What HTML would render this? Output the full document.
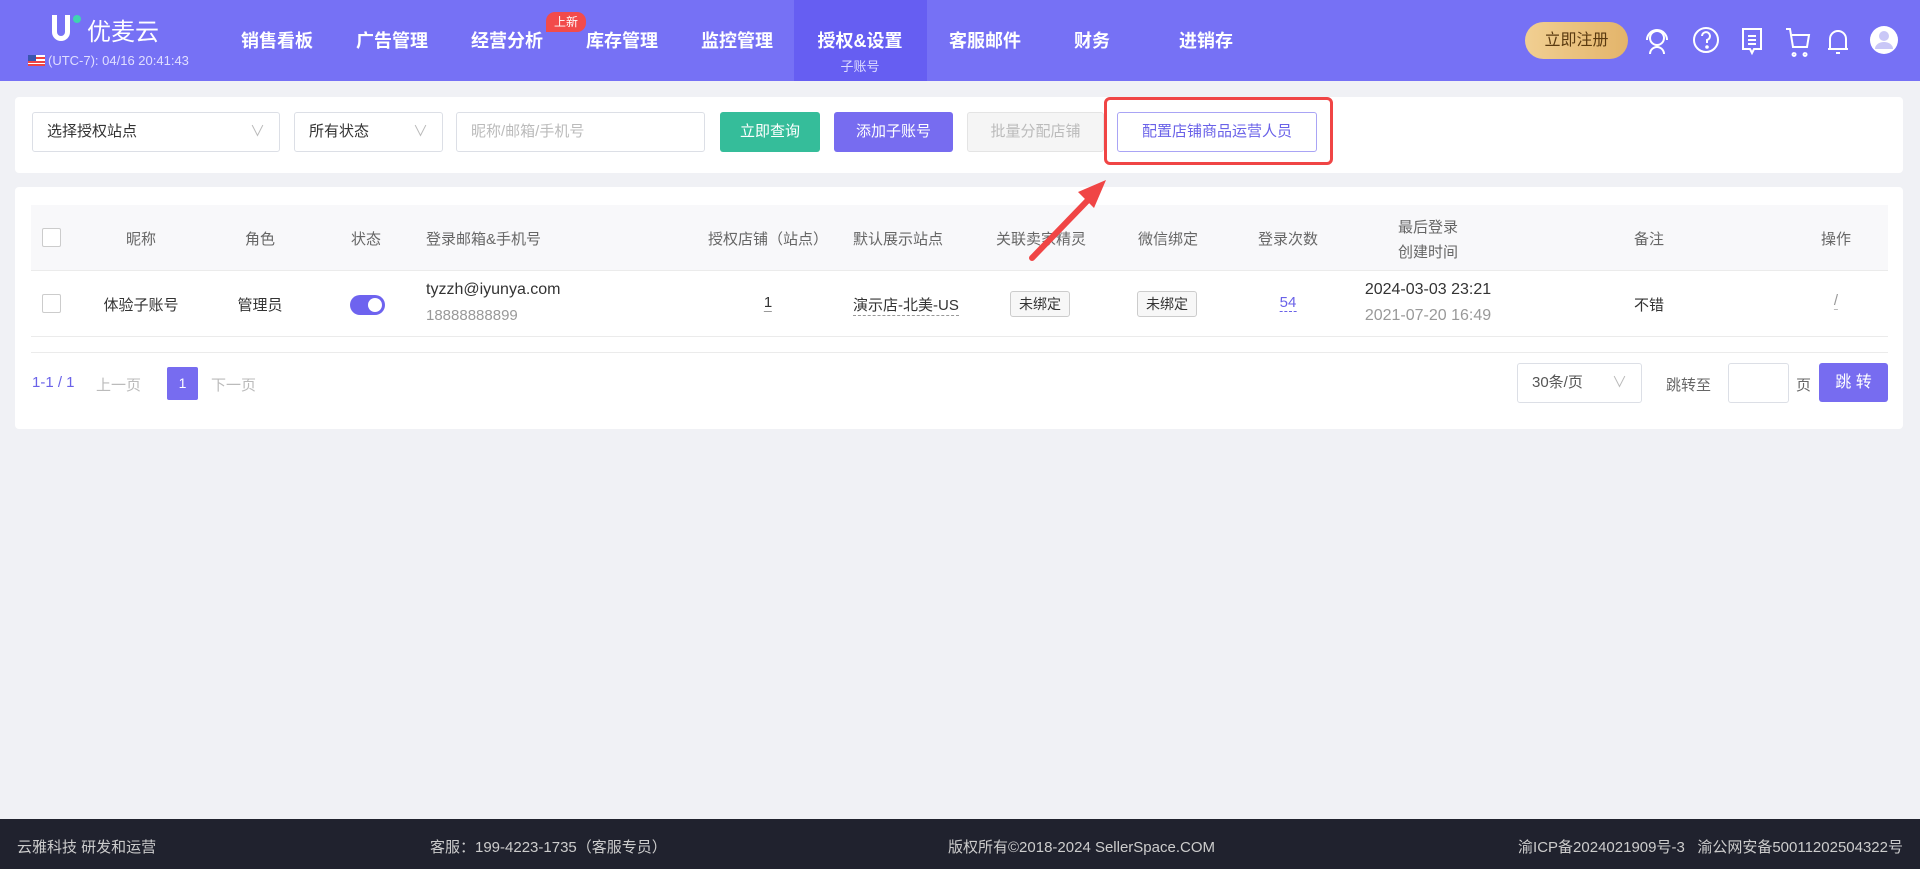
<!DOCTYPE html>
<html><head><meta charset="utf-8"><style>
*{box-sizing:border-box;margin:0;padding:0}
body{width:1920px;height:869px;background:#f0f1f5;font-family:"Liberation Sans","Noto Sans CJK SC",sans-serif;position:relative;overflow:hidden;color:#333}
.abs{position:absolute}
.hdr{left:0;top:0;width:1920px;height:81px;background:#7671f5}
.nav{top:27px;font-size:18px;font-weight:bold;color:#fff;transform:translateX(-50%);white-space:nowrap}
.card{background:#fff;border-radius:4px}
.inp{border:1px solid #dcdfe6;border-radius:3px;height:40px;font-size:15px;line-height:38px;padding-left:14px;background:#fff}
.btn{height:40px;border-radius:3px;font-size:15px;line-height:40px;text-align:center;color:#fff}
.th{font-size:15px;color:#666;transform:translateX(-50%);white-space:nowrap}
.td{font-size:15px;color:#333;transform:translateX(-50%);white-space:nowrap}
.tag{border:1px solid #ccc;border-radius:3px;background:#f7f7f7;font-size:14px;padding:2px 8px}
.chk{width:19px;height:19px;border:1px solid #ccc;border-radius:2px;background:#fff}
.ft{font-size:15px;color:#ccc;top:836px}
.ico{top:26px;width:28px;height:28px}
</style></head><body>
<div class="abs hdr"></div>
<div class="abs" style="left:52px;top:15px;width:18px;height:26px;border:5px solid #fff;border-top:none;border-radius:0 0 9px 9px"></div>
<div class="abs" style="left:73px;top:15px;width:8px;height:8px;border-radius:50%;background:#3ed3b0"></div>
<div class="abs" style="left:87px;top:12px;font-size:24px;color:#fff">优麦云</div>
<div class="abs" style="left:28px;top:55px;width:17px;height:11px;background:linear-gradient(#fff 0 2px,#e44 2px 4px,#fff 4px 6px,#e44 6px 8px,#fff 8px 9px,#e44 9px);"><div style="width:8px;height:6px;background:#3a55b0"></div></div>
<div class="abs" style="left:48px;top:53px;font-size:13px;color:#e0deff">(UTC-7): 04/16 20:41:43</div>
<div class="abs" style="left:794px;top:0;width:133px;height:81px;background:#665ef2"></div>
<div class="abs nav" style="left:277px">销售看板</div>
<div class="abs nav" style="left:392px">广告管理</div>
<div class="abs nav" style="left:507px">经营分析</div>
<div class="abs" style="left:546px;top:12px;width:40px;height:20px;border-radius:9px 9px 9px 0;background:#f24b4b;color:#fff;font-size:12px;text-align:center;line-height:20px">上新</div>
<div class="abs nav" style="left:622px">库存管理</div>
<div class="abs nav" style="left:737px">监控管理</div>
<div class="abs nav" style="left:860px">授权&amp;设置</div>
<div class="abs" style="left:860px;top:56px;transform:translateX(-50%);font-size:13px;color:#dcdaff">子账号</div>
<div class="abs nav" style="left:985px">客服邮件</div>
<div class="abs nav" style="left:1092px">财务</div>
<div class="abs nav" style="left:1206px">进销存</div>
<div class="abs" style="left:1525px;top:22px;width:103px;height:37px;border-radius:19px;background:linear-gradient(90deg,#f1cf92,#e3b46a);color:#5a3a10;font-size:16px;text-align:center;line-height:37px">立即注册</div>
<svg class="abs" style="left:1640px;top:24px" width="270" height="34" viewBox="0 0 270 34" fill="none" stroke="#fff" stroke-width="2">
<circle cx="17" cy="14" r="7"/><path d="M7 16a10 10 0 0 1 20 0M10 30a7 7 0 0 1 14 0"/>
<circle cx="66" cy="16" r="12"/><path d="M62 12a4 4 0 1 1 5 4v3"/><circle cx="67" cy="23" r="0.8" fill="#fff"/>
<path d="M103 5h18v20h-7l-2 4-2-4h-7z"/><path d="M108 12h8M108 16h8M108 20h8"/>
<path d="M146 5h4l3 18h14l2-12h-17M154 29a1.5 1.5 0 1 0 .1 0M165 29a1.5 1.5 0 1 0 .1 0"/>
<path d="M190 25V15a8 8 0 0 1 16 0v10h2H188M196 29h4"/>
<circle cx="244" cy="16" r="14" fill="#fff" stroke="none"/><circle cx="244" cy="12" r="5" fill="#c9c7f7" stroke="none"/><path d="M235 25a9 7 0 0 1 18 0" fill="#c9c7f7" stroke="none"/>
</svg>

<div class="abs card" style="left:15px;top:97px;width:1888px;height:76px"></div>
<div class="abs inp" style="left:32px;top:112px;width:248px;color:#333">选择授权站点<span style="position:absolute;right:14px;color:#bbb">∨</span></div>
<div class="abs inp" style="left:294px;top:112px;width:149px;color:#333">所有状态<span style="position:absolute;right:14px;color:#bbb">∨</span></div>
<div class="abs inp" style="left:456px;top:112px;width:249px;color:#bbb">昵称/邮箱/手机号</div>
<div class="abs btn" style="left:720px;top:112px;width:100px;background:#35bd9a">立即查询</div>
<div class="abs btn" style="left:834px;top:112px;width:119px;background:#776cf0">添加子账号</div>
<div class="abs btn" style="left:967px;top:112px;width:137px;background:#f5f5f5;border:1px solid #e4e4e4;color:#bbb;line-height:38px">批量分配店铺</div>
<div class="abs btn" style="left:1117px;top:112px;width:200px;background:#fff;border:1px solid #a9a4f5;color:#6a62e8;line-height:38px">配置店铺商品运营人员</div>
<div class="abs" style="left:1104px;top:97px;width:229px;height:68px;border:3px solid #f04545;border-radius:6px"></div>

<div class="abs card" style="left:15px;top:187px;width:1888px;height:242px"></div>
<div class="abs" style="left:31px;top:205px;width:1857px;height:66px;background:#f8f8fa;border-bottom:1px solid #ebebeb"></div>
<div class="abs" style="left:31px;top:336px;width:1857px;height:1px;background:#ebebeb"></div>
<div class="abs" style="left:31px;top:352px;width:1857px;height:1px;background:#ebebeb"></div>
<div class="abs chk" style="left:42px;top:228px"></div>
<div class="abs th" style="left:141px;top:228px">昵称</div>
<div class="abs th" style="left:260px;top:228px">角色</div>
<div class="abs th" style="left:366px;top:228px">状态</div>
<div class="abs th" style="left:426px;top:228px;transform:none">登录邮箱&amp;手机号</div>
<div class="abs th" style="left:768px;top:228px">授权店铺（站点）</div>
<div class="abs th" style="left:853px;top:228px;transform:none">默认展示站点</div>
<div class="abs th" style="left:1041px;top:228px">关联卖家精灵</div>
<div class="abs th" style="left:1168px;top:228px">微信绑定</div>
<div class="abs th" style="left:1288px;top:228px">登录次数</div>
<div class="abs th" style="left:1428px;top:216px">最后登录</div>
<div class="abs th" style="left:1428px;top:241px">创建时间</div>
<div class="abs th" style="left:1649px;top:228px">备注</div>
<div class="abs th" style="left:1836px;top:228px">操作</div>

<div class="abs chk" style="left:42px;top:294px"></div>
<div class="abs td" style="left:141px;top:294px">体验子账号</div>
<div class="abs td" style="left:260px;top:294px">管理员</div>
<div class="abs" style="left:350px;top:295px;width:35px;height:20px;border-radius:10px;background:#6e63ef"><div style="position:absolute;right:3px;top:3px;width:14px;height:14px;border-radius:50%;background:#fff"></div></div>
<div class="abs" style="left:426px;top:281px;font-size:16px">tyzzh@iyunya.com</div>
<div class="abs" style="left:426px;top:307px;font-size:15px;color:#999">18888888899</div>
<div class="abs td" style="left:768px;top:294px;border-bottom:1px solid #999">1</div>
<div class="abs" style="left:853px;top:294px;font-size:15px;border-bottom:1px dashed #999">演示店-北美-US</div>
<div class="abs tag" style="left:1010px;top:291px">未绑定</div>
<div class="abs tag" style="left:1137px;top:291px">未绑定</div>
<div class="abs td" style="left:1288px;top:294px;color:#6a62e8;border-bottom:1px dashed #6a62e8">54</div>
<div class="abs td" style="left:1428px;top:281px;font-size:16px">2024-03-03 23:21</div>
<div class="abs td" style="left:1428px;top:307px;color:#999;font-size:16px">2021-07-20 16:49</div>
<div class="abs td" style="left:1649px;top:294px">不错</div>
<div class="abs td" style="left:1836px;top:292px;color:#999;border-bottom:1px dashed #bbb">/</div>

<div class="abs" style="left:32px;top:374px;font-size:15px;color:#6a62e8">1-1 / 1</div>
<div class="abs" style="left:96px;top:374px;font-size:15px;color:#bbb">上一页</div>
<div class="abs" style="left:167px;top:367px;width:31px;height:33px;background:#776cf0;color:#fff;font-size:14px;text-align:center;line-height:33px;border-radius:2px">1</div>
<div class="abs" style="left:211px;top:374px;font-size:15px;color:#bbb">下一页</div>
<div class="abs inp" style="left:1517px;top:363px;width:125px;color:#555">30条/页<span style="position:absolute;right:14px;color:#bbb">∨</span></div>
<div class="abs" style="left:1666px;top:374px;font-size:15px;color:#666">跳转至</div>
<div class="abs inp" style="left:1728px;top:363px;width:61px"></div>
<div class="abs" style="left:1796px;top:374px;font-size:15px;color:#666">页</div>
<div class="abs btn" style="left:1819px;top:363px;width:69px;background:#776cf0;font-size:16px;height:39px;line-height:39px">跳 转</div>

<div class="abs" style="left:0;top:819px;width:1920px;height:50px;background:#20222e"></div>
<div class="abs ft" style="left:17px">云雅科技 研发和运营</div>
<div class="abs ft" style="left:430px">客服：199-4223-1735（客服专员）</div>
<div class="abs ft" style="left:948px">版权所有©2018-2024 SellerSpace.COM</div>
<div class="abs ft" style="right:17px">渝ICP备2024021909号-3&nbsp;&nbsp;&nbsp;渝公网安备50011202504322号</div>

<svg class="abs" style="left:1020px;top:170px" width="100" height="100"><path d="M12 88L70 28" stroke="#f04545" stroke-width="6" stroke-linecap="round"/><path d="M86 10L58 22L74 38Z" fill="#f04545"/></svg>
</body></html>
